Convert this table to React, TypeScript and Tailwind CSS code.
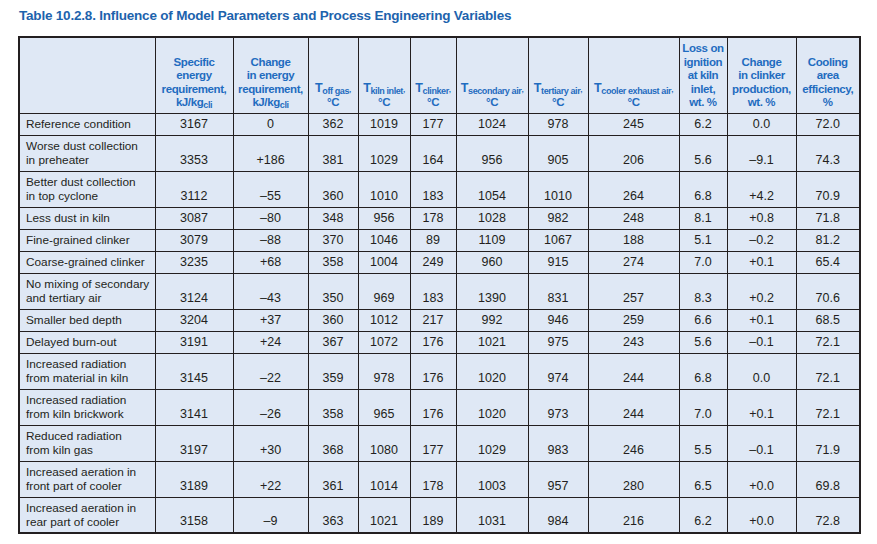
import React from "react";

type Row = {
  label: string[];
  values: string[];
};

const rows: Row[] = [
  { label: ["Reference condition"], values: ["3167", "0", "362", "1019", "177", "1024", "978", "245", "6.2", "0.0", "72.0"] },
  { label: ["Worse dust collection", "in preheater"], values: ["3353", "+186", "381", "1029", "164", "956", "905", "206", "5.6", "–9.1", "74.3"] },
  { label: ["Better dust collection", "in top cyclone"], values: ["3112", "–55", "360", "1010", "183", "1054", "1010", "264", "6.8", "+4.2", "70.9"] },
  { label: ["Less dust in kiln"], values: ["3087", "–80", "348", "956", "178", "1028", "982", "248", "8.1", "+0.8", "71.8"] },
  { label: ["Fine-grained clinker"], values: ["3079", "–88", "370", "1046", "89", "1109", "1067", "188", "5.1", "–0.2", "81.2"] },
  { label: ["Coarse-grained clinker"], values: ["3235", "+68", "358", "1004", "249", "960", "915", "274", "7.0", "+0.1", "65.4"] },
  { label: ["No mixing of secondary", "and tertiary air"], values: ["3124", "–43", "350", "969", "183", "1390", "831", "257", "8.3", "+0.2", "70.6"] },
  { label: ["Smaller bed depth"], values: ["3204", "+37", "360", "1012", "217", "992", "946", "259", "6.6", "+0.1", "68.5"] },
  { label: ["Delayed burn-out"], values: ["3191", "+24", "367", "1072", "176", "1021", "975", "243", "5.6", "–0.1", "72.1"] },
  { label: ["Increased radiation", "from material in kiln"], values: ["3145", "–22", "359", "978", "176", "1020", "974", "244", "6.8", "0.0", "72.1"] },
  { label: ["Increased radiation", "from kiln brickwork"], values: ["3141", "–26", "358", "965", "176", "1020", "973", "244", "7.0", "+0.1", "72.1"] },
  { label: ["Reduced radiation", "from kiln gas"], values: ["3197", "+30", "368", "1080", "177", "1029", "983", "246", "5.5", "–0.1", "71.9"] },
  { label: ["Increased aeration in", "front part of cooler"], values: ["3189", "+22", "361", "1014", "178", "1003", "957", "280", "6.5", "+0.0", "69.8"] },
  { label: ["Increased aeration in", "rear part of cooler"], values: ["3158", "–9", "363", "1021", "189", "1031", "984", "216", "6.2", "+0.0", "72.8"] },
];

// column widths in px, taken from the printed table
const cols = [136, 78, 75, 50, 52, 46, 72, 60, 91, 48, 69, 64];

function Temp({ sub }: { sub: string }) {
  return (
    <>
      <span className="text-[12.5px]">T</span>
      <sub className="text-[9px] bottom-[-2px]">{sub}</sub>
      <span className="text-[8px]">,</span>
      <br />
      °C
    </>
  );
}

function Cli({ label }: { label: string }) {
  return (
    <>
      {label}
      <sub className="text-[9px] bottom-[-2px]">cli</sub>
    </>
  );
}

const headers: React.ReactNode[] = [
  null,
  <>
    Specific
    <br />
    energy
    <br />
    requirement,
    <br />
    <Cli label="kJ/kg" />
  </>,
  <>
    Change
    <br />
    in energy
    <br />
    requirement,
    <br />
    <Cli label="kJ/kg" />
  </>,
  <Temp sub="off gas" />,
  <Temp sub="kiln inlet" />,
  <Temp sub="clinker" />,
  <Temp sub="secondary air" />,
  <Temp sub="tertiary air" />,
  <Temp sub="cooler exhaust air" />,
  <>
    Loss on
    <br />
    ignition
    <br />
    at kiln
    <br />
    inlet,
    <br />
    wt. %
  </>,
  <>
    Change
    <br />
    in clinker
    <br />
    production,
    <br />
    wt. %
  </>,
  <>
    Cooling
    <br />
    area
    <br />
    efficiency,
    <br />%
  </>,
];

export default function App() {
  return (
    <div className="w-[877px] h-[544px] bg-white pl-[18px] pt-[7px] font-['Liberation_Sans',Arial,sans-serif]">
      <h1 className="text-[13.5px] leading-[18px] font-bold text-[#1d63ad] tracking-[-0.2px] pl-px">
        Table 10.2.8. Influence of Model Parameters and Process Engineering Variables
      </h1>

      <table className="mt-[11px] table-fixed w-[842px] border-collapse border-2 border-[#231f20] bg-[#dfe8f5] text-[#231f20]">
        <colgroup>
          {cols.map((w, i) => (
            <col key={i} style={{ width: w }} />
          ))}
        </colgroup>
        <thead>
          <tr>
            {headers.map((h, i) => (
              <th
                key={i}
                className="h-[76px] border border-[#231f20] align-bottom text-center pb-[3px] px-0 text-[11.5px] leading-[13.5px] font-bold text-[#1f6cc0] tracking-[-0.4px]"
              >
                {h}
              </th>
            ))}
          </tr>
        </thead>
        <tbody>
          {rows.map((r, i) => {
            const tall = r.label.length > 1;
            return (
              <tr key={i}>
                <td
                  className={`${tall ? "h-[36px]" : "h-[22px]"} border border-[#231f20] align-top pl-[6px] pr-1 py-[3px] text-[11.8px] leading-[14px]`}
                >
                  {r.label.map((l, j) => (
                    <div key={j}>{l}</div>
                  ))}
                </td>
                {r.values.map((v, j) => (
                  <td
                    key={j}
                    className="border border-[#231f20] align-bottom text-center pb-[4px] text-[12.5px] leading-[14px]"
                  >
                    {v}
                  </td>
                ))}
              </tr>
            );
          })}
        </tbody>
      </table>
    </div>
  );
}
